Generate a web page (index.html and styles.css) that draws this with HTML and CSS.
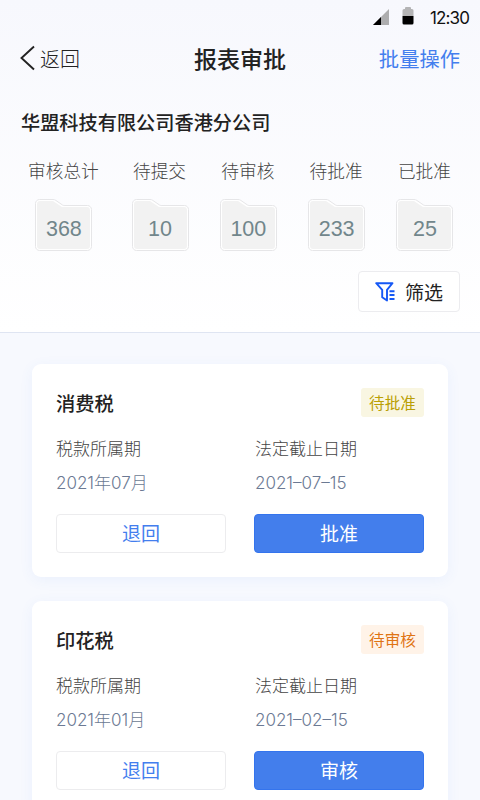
FILE: index.html
```html
<!DOCTYPE html>
<html lang="zh-CN">
<head>
  <meta charset="UTF-8">
  <meta name="viewport" content="width=device-width, initial-scale=1">
  <title>报表审批</title>
  <link rel="stylesheet" href="styles.css">
</head>
<body>

  <svg width="0" height="0" class="defs">
    <symbol id="folder" viewBox="0 0 57 52">
      <path d="M4.500.5H18c1 0 2 .3 2.800.9L27.500 6c.5.3 1 .5 1.600.5H52.500c2.200 0 4 1.800 4 4v37c0 2.200-1.800 4-4 4h-48c-2.200 0-4-1.800-4-4v-43c0-2.200 1.800-4 4-4z" fill="#fff" stroke="#e6e6e8"/>
      <path d="M5 2h13l9 6H52c1.700 0 3 1.300 3 3v36c0 1.700-1.300 3-3 3H5c-1.700 0-3-1.300-3-3V5c0-1.700 1.300-3 3-3z" fill="#f2f2f2"/>
    </symbol>
  </svg>

  <div class="top">
    <div class="status">
      <svg width="16" height="16" viewBox="0 0 16 16">
        <path d="M0 16L16 0v16z" fill="#adadae"/>
        <path d="M0 16L8 8v8z" fill="#000"/>
      </svg>
      <svg class="battery" width="12" height="18" viewBox="0 0 12 18">
        <path d="M3 2V1q0-1 1-1h4q1 0 1 1v1h1q1.500 0 1.500 1.500V9H.5V3.500Q.5 2 2 2z" fill="#b4b4b5"/>
        <path d="M.5 9h11v7q0 1.500-1.500 1.500H2Q.5 17.500.5 16z" fill="#000"/>
      </svg>
      <span class="time">12:30</span>
    </div>

    <div class="nav">
      <a class="back">
        <svg width="15" height="26" viewBox="0 0 15 26">
          <path d="M14 1.500L1.500 13 14 24.500" fill="none" stroke="#222" stroke-width="1.900"/>
        </svg>
        返回
      </a>
      <h1>报表审批</h1>
      <a class="batch">批量操作</a>
    </div>

    <h2 class="company">华盟科技有限公司香港分公司</h2>

    <div class="stats">
      <div class="stat">
        <span>审核总计</span>
        <div class="folder"><svg><use href="#folder"/></svg><b>368</b></div>
      </div>
      <div class="stat">
        <span>待提交</span>
        <div class="folder"><svg><use href="#folder"/></svg><b>10</b></div>
      </div>
      <div class="stat">
        <span>待审核</span>
        <div class="folder"><svg><use href="#folder"/></svg><b>100</b></div>
      </div>
      <div class="stat">
        <span>待批准</span>
        <div class="folder"><svg><use href="#folder"/></svg><b>233</b></div>
      </div>
      <div class="stat">
        <span>已批准</span>
        <div class="folder"><svg><use href="#folder"/></svg><b>25</b></div>
      </div>
    </div>

    <button class="filter">
      <svg width="20" height="20" viewBox="0 0 20 20" fill="none" stroke="#1558f5" stroke-width="1.900">
        <path d="M1.200 1.200h16.300L12 7.800v10.700l-4.800-3.200V7.800z" stroke-linejoin="round"/>
        <path d="M14.500 9.300H19.500M14.500 13H19.500M14.500 17H19.500"/>
      </svg>
      筛选
    </button>
  </div>

  <div class="list">
    <div class="card">
      <div class="card-head">
        <h3>消费税</h3>
        <span class="tag approve">待批准</span>
      </div>
      <div class="info">
        <div><p class="label">税款所属期</p><p class="value">2021年07月</p></div>
        <div><p class="label">法定截止日期</p><p class="value">2021–07–15</p></div>
      </div>
      <div class="actions">
        <button class="btn">退回</button>
        <button class="btn primary">批准</button>
      </div>
    </div>

    <div class="card">
      <div class="card-head">
        <h3>印花税</h3>
        <span class="tag review">待审核</span>
      </div>
      <div class="info">
        <div><p class="label">税款所属期</p><p class="value">2021年01月</p></div>
        <div><p class="label">法定截止日期</p><p class="value">2021–02–15</p></div>
      </div>
      <div class="actions">
        <button class="btn">退回</button>
        <button class="btn primary">审核</button>
      </div>
    </div>
  </div>

</body>
</html>
```
FILE: styles.css
```css
* {
  box-sizing: border-box;
  margin: 0;
  padding: 0;
}

html {
  height: 800px;
  overflow: hidden;
}

body {
  height: 800px;
  overflow: hidden;
  background: #f7f9fe;
  color: #222;
  font-family: Inter, "Noto Sans CJK SC", sans-serif;
}

svg {
  display: block;
  flex: none;
}

.defs {
  position: absolute;
}

button {
  font-family: inherit;
  cursor: pointer;
}

.top {
  height: 333px;
  background: linear-gradient(#f7f8fd, #fff);
  border-bottom: 1px solid #dfe5f2;
}

.status {
  display: flex;
  align-items: center;
  justify-content: flex-end;
  height: 33px;
  padding-right: 11px;
}

.status .battery {
  margin: -2px 16px 0 13px;
}

.time {
  padding-top: 2px;
  font-size: 17px;
  line-height: 20px;
  letter-spacing: -0.9px;
  color: #111;
}

.nav {
  display: grid;
  grid-template-columns: 1fr auto 1fr;
  align-items: center;
  height: 50px;
  padding: 0 20px;
}

.back {
  display: flex;
  align-items: center;
  gap: 5px;
  font-size: 20px;
  font-weight: 300;
}

h1 {
  font-size: 23px;
  font-weight: 500;
}

.batch {
  text-align: right;
  font-size: 20.3px;
  font-weight: 400;
  color: #437eee;
}

.company {
  height: 30px;
  margin-top: 25px;
  padding-left: 21px;
  font-size: 19.2px;
  font-weight: 500;
  line-height: 30px;
}

.stats {
  display: flex;
  justify-content: space-between;
  margin-top: 21px;
  padding: 0 28px;
}

.stat {
  display: flex;
  flex-direction: column;
  align-items: center;
  font-size: 17.7px;
  font-weight: 300;
  line-height: 26px;
  color: #444;
}

.stat:not(:first-child) {
  margin: 0 1px 0 -1px;
}

.folder {
  display: grid;
  width: 57px;
  height: 52px;
  margin: 14px -3px 0 -2px;
}

.folder svg,
.folder b {
  grid-area: 1 / 1;
}

.folder svg {
  width: 57px;
  height: 52px;
}

.folder b {
  padding-top: 17px;
  text-align: center;
  font-family: "Liberation Sans", sans-serif;
  font-size: 21.5px;
  font-weight: 400;
  line-height: 26px;
  color: #71868b;
}

.filter {
  display: flex;
  align-items: center;
  gap: 10px;
  width: 102px;
  height: 41px;
  margin: 20px 20px 0 auto;
  padding-left: 16px;
  background: #fff;
  border: 1px solid #ececef;
  border-radius: 4px;
  font-size: 19px;
  color: #222;
}

.list {
  display: flex;
  flex-direction: column;
  gap: 24px;
  height: 467px;
  padding: 31px 32px 0;
  overflow: hidden;
}

.card {
  flex: none;
  height: 213px;
  padding: 24px;
  background: #fff;
  border-radius: 9px;
  box-shadow: 0 3px 14px rgba(67, 126, 238, 0.07);
}

.card-head {
  display: flex;
  justify-content: space-between;
  height: 29px;
}

h3 {
  padding-top: 2px;
  font-size: 19.3px;
  font-weight: 500;
  line-height: 29px;
}

.tag {
  width: 63px;
  height: 29px;
  border-radius: 3px;
  text-align: center;
  font-size: 15.6px;
  line-height: 31px;
}

.approve {
  background: #f9f6e2;
  color: #baa005;
}

.review {
  background: #fff3e8;
  color: #df7413;
}

.info {
  display: grid;
  grid-template-columns: 1fr 1fr;
  column-gap: 30px;
  margin-top: 19px;
  font-size: 17px;
  font-weight: 300;
}

.label {
  line-height: 26px;
  color: #444;
}

.value {
  margin-top: 8px;
  line-height: 26px;
  color: #6b7993;
}

.actions {
  display: grid;
  grid-template-columns: 1fr 1fr;
  gap: 28px;
  margin-top: 18px;
}

.btn {
  height: 39px;
  padding-bottom: 2px;
  background: #fff;
  border: 1px solid #ececee;
  border-radius: 4px;
  font-size: 19px;
  color: #437eee;
}

.primary {
  background: #437eec;
  border-color: #3474ed;
  color: #fff;
}
```
